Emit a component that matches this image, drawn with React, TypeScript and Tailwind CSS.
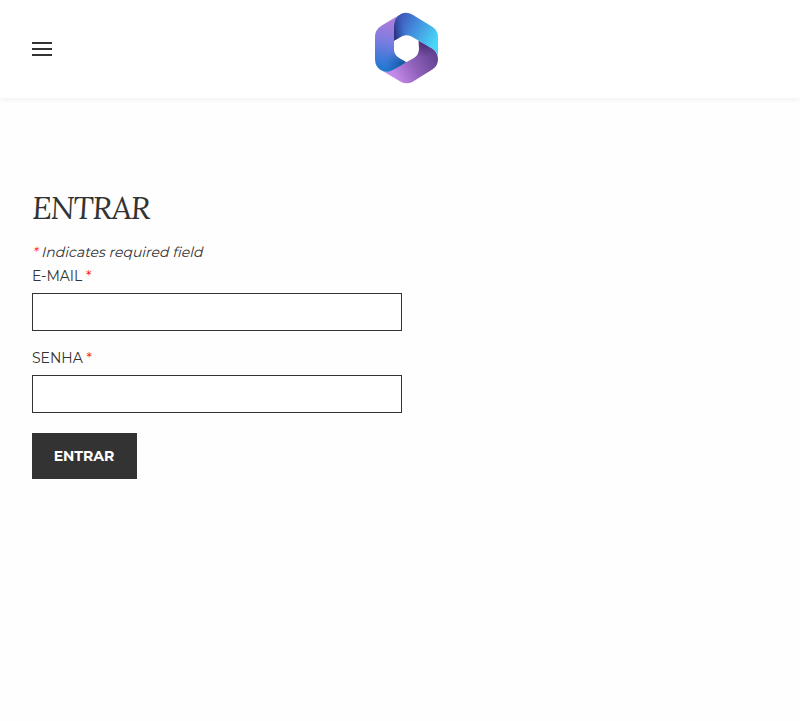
function Logo() {
  return (
    <svg className="mb-0.5 ml-[314px] h-[88px] w-20" viewBox="0 0 240 264" role="img" aria-label="Microsoft 365">
      <defs>
        <linearGradient id="left" gradientUnits="userSpaceOnUse" x1="76" y1="45" x2="46" y2="200">
          <stop offset="0" stopColor="#b07cdd" />
          <stop offset=".42" stopColor="#7d7ce0" />
          <stop offset=".78" stopColor="#3e7ad8" />
          <stop offset="1" stopColor="#1c78ce" />
        </linearGradient>
        <radialGradient id="leftShade" gradientUnits="userSpaceOnUse" cx="112" cy="184" r="56">
          <stop offset="0" stopColor="#0b4d92" stopOpacity=".9" />
          <stop offset="1" stopColor="#1663b5" stopOpacity="0" />
        </radialGradient>
        <linearGradient id="top" gradientUnits="userSpaceOnUse" x1="88" y1="62" x2="205" y2="126">
          <stop offset="0" stopColor="#3f58b8" />
          <stop offset=".35" stopColor="#4385da" />
          <stop offset="1" stopColor="#49d9f8" />
        </linearGradient>
        <linearGradient id="topShade" gradientUnits="userSpaceOnUse" x1="84" y1="80" x2="118" y2="72">
          <stop offset="0" stopColor="#272c75" stopOpacity=".85" />
          <stop offset="1" stopColor="#3157b5" stopOpacity="0" />
        </linearGradient>
        <linearGradient id="bottom" gradientUnits="userSpaceOnUse" x1="85" y1="212" x2="205" y2="148">
          <stop offset="0" stopColor="#c38ae9" />
          <stop offset=".45" stopColor="#9363bd" />
          <stop offset="1" stopColor="#634293" />
        </linearGradient>
        <radialGradient id="bottomShade" gradientUnits="userSpaceOnUse" cx="174" cy="114" r="46">
          <stop offset="0" stopColor="#45276d" stopOpacity=".9" />
          <stop offset="1" stopColor="#50307c" stopOpacity="0" />
        </radialGradient>
      </defs>
      <g transform="translate(0 1)">
        <path fill="url(#bottom)" d="M158 109L200 133Q216 144 216 165Q216 185 200 195L140 232Q122 242 104 232L50 200Q67 204 82 195L145 160Q159 150 159 133Z" />
        <path fill="url(#bottomShade)" d="M158 109L200 133Q216 144 216 165Q216 185 200 195L140 232Q122 242 104 232L50 200Q67 204 82 195L145 160Q159 150 159 133Z" />
        <path fill="url(#left)" d="M106 28L46 64Q27 76 27 98V164Q27 190 48 199Q65 206 82 196L121 174L98 160Q84 151 84 135V62Q86 37 106 28Z" />
        <path fill="url(#leftShade)" d="M106 28L46 64Q27 76 27 98V164Q27 190 48 199Q65 206 82 196L121 174L98 160Q84 151 84 135V62Q86 37 106 28Z" />
        <path fill="url(#top)" d="M84 109V65Q85 38 106 28Q123 22 140 31L200 68Q216 79 216 98V159Q213 141 200 133L135 96Q122 90 108 96Z" />
        <path fill="url(#topShade)" d="M84 109V65Q85 38 106 28Q123 22 140 31L200 68Q216 79 216 98V159Q213 141 200 133L135 96Q122 90 108 96Z" />
      </g>
    </svg>
  );
}

function Field({ label, type }: { label: string; type: string }) {
  return (
    <label className="mb-4 block text-sm leading-[22px]">
      <span className="block h-[28px] whitespace-nowrap">
        {label} <span className="text-[#ff1f1f]">*</span>
      </span>
      <input type={type} className="block h-[38px] w-[370px] border border-[#333333] bg-white px-3 outline-none" />
    </label>
  );
}

export default function App() {
  return (
    <div className="min-h-[721px] bg-[#fefefe] font-['Montserrat','Inter',sans-serif] text-[#333333]">
      <header className="flex h-[98px] items-center bg-white pl-8 shadow-[0_2px_6px_rgba(0,0,0,0.05)]">
        <button aria-label="Menu" className="flex w-5 flex-col gap-1">
          <span className="h-0.5 bg-[#333333]" />
          <span className="h-0.5 bg-[#333333]" />
          <span className="h-0.5 bg-[#333333]" />
        </button>
        <Logo />
      </header>
      <main className="px-8 pt-[88px]">
        <h1 className="h-[56px] font-['Lora','Liberation_Serif',serif] text-[32px] italic leading-[44px] tracking-[-1.44px]">ENTRAR</h1>
        <p className="h-[23px] origin-[0_15px] -skew-x-[14deg] whitespace-nowrap text-[14px] leading-[20px]">
          <span className="text-[#ff1f1f]">*</span> Indicates required field
        </p>
        <form onSubmit={(e) => e.preventDefault()}>
          <Field label="E-MAIL" type="email" />
          <Field label="SENHA" type="password" />
          <button className="mt-1 h-[46px] w-[105px] bg-[#333333] pr-px text-[14px] font-bold text-white">ENTRAR</button>
        </form>
      </main>
    </div>
  );
}
